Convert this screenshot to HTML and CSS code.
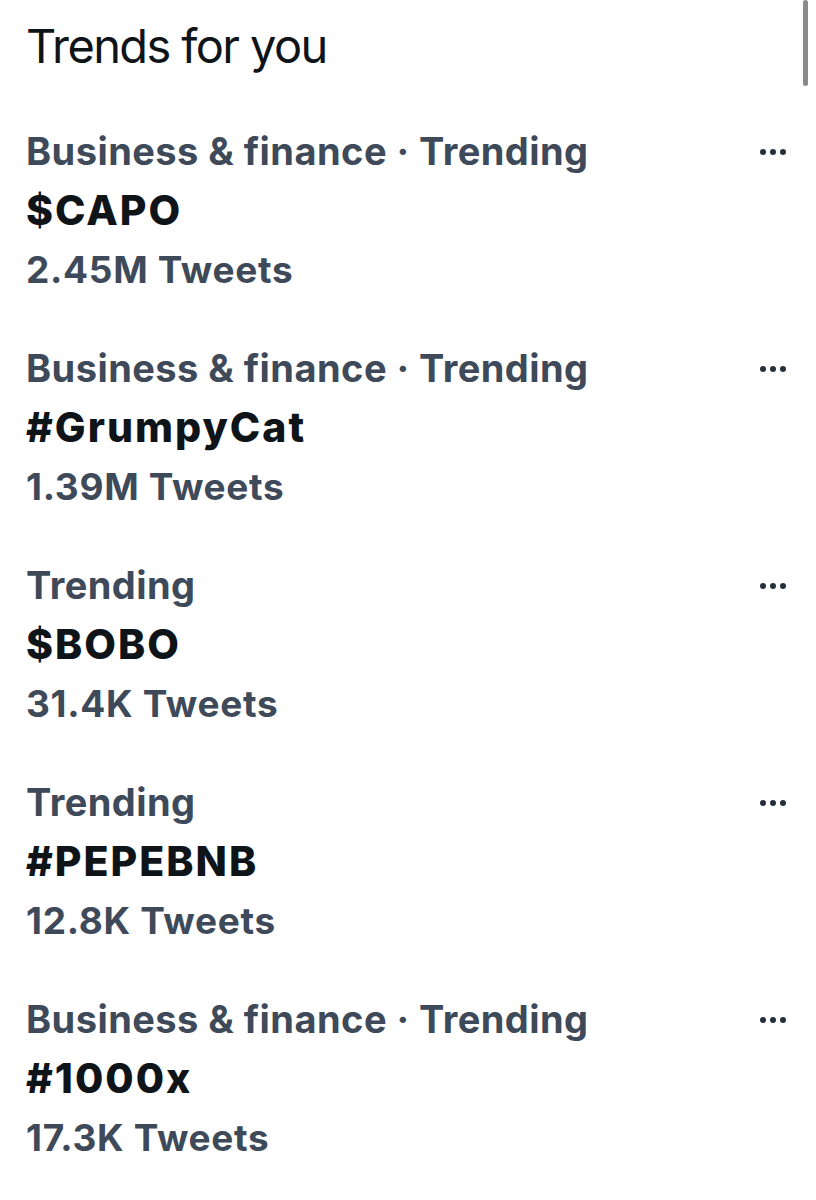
FILE: index.html
```html
<!DOCTYPE html>
<html>
<head>
<meta charset="utf-8">
<link rel="stylesheet" href="styles.css">
</head>
<body>
<div class="scrollbar"></div>
<main class="panel">
  <h2 class="title">Trends for you</h2>
  <ul class="trends">
    <li class="trend">
      <div class="info">
        <div class="meta">Business &amp; finance · Trending</div>
        <div class="name">$CAPO</div>
        <div class="count">2.45M Tweets</div>
      </div>
      <button class="more" aria-label="More"><span></span><span></span><span></span></button>
    </li>
    <li class="trend">
      <div class="info">
        <div class="meta">Business &amp; finance · Trending</div>
        <div class="name">#GrumpyCat</div>
        <div class="count">1.39M Tweets</div>
      </div>
      <button class="more" aria-label="More"><span></span><span></span><span></span></button>
    </li>
    <li class="trend">
      <div class="info">
        <div class="meta">Trending</div>
        <div class="name">$BOBO</div>
        <div class="count">31.4K Tweets</div>
      </div>
      <button class="more" aria-label="More"><span></span><span></span><span></span></button>
    </li>
    <li class="trend">
      <div class="info">
        <div class="meta">Trending</div>
        <div class="name">#PEPEBNB</div>
        <div class="count">12.8K Tweets</div>
      </div>
      <button class="more" aria-label="More"><span></span><span></span><span></span></button>
    </li>
    <li class="trend">
      <div class="info">
        <div class="meta">Business &amp; finance · Trending</div>
        <div class="name">#1000x</div>
        <div class="count">17.3K Tweets</div>
      </div>
      <button class="more" aria-label="More"><span></span><span></span><span></span></button>
    </li>
  </ul>
</main>
</body>
</html>
```
FILE: styles.css
```css
html, body {
  margin: 0;
  padding: 0;
  background: #ffffff;
}
body {
  font-family: Inter, "Noto Sans", "Liberation Sans", sans-serif;
  color: #0f1419;
  width: 816px;
  height: 1200px;
  overflow: hidden;
  position: relative;
}
.scrollbar {
  position: absolute;
  top: 0;
  right: 8px;
  width: 5px;
  height: 86px;
  border-radius: 3px;
  background: #8a8a8a;
}
.panel {
  padding: 16px 0 0 26px;
}
.title {
  margin: 0;
  font-size: 47px;
  font-weight: 400;
  line-height: 60px;
  letter-spacing: -1.6px;
  color: #0f1419;
}
.trends {
  list-style: none;
  margin: 0;
  padding: 0;
  margin-top: 46px;
  display: flex;
  flex-direction: column;
  gap: 40px;
}
.trend {
  display: flex;
  justify-content: space-between;
  align-items: flex-start;
  padding-right: 28px;
}
.info {
  display: flex;
  flex-direction: column;
}
.meta, .name, .count {
  line-height: 59px;
  font-weight: 700;
  white-space: nowrap;
}
.meta {
  font-size: 38px;
  letter-spacing: 0.45px;
  color: #3e4a59;
}
.count {
  font-size: 37px;
  letter-spacing: 0.7px;
  color: #3e4a59;
}
.name {
  font-size: 41px;
  font-weight: 800;
  letter-spacing: 2px;
  color: #0f1419;
}
.more {
  border: 0;
  background: none;
  padding: 0;
  margin: 0;
  height: 59px;
  width: 30px;
  display: flex;
  align-items: center;
  justify-content: space-between;
  padding: 0 2px;
}
.more span {
  width: 6px;
  height: 6px;
  border-radius: 50%;
  background: #26303b;
}
```
